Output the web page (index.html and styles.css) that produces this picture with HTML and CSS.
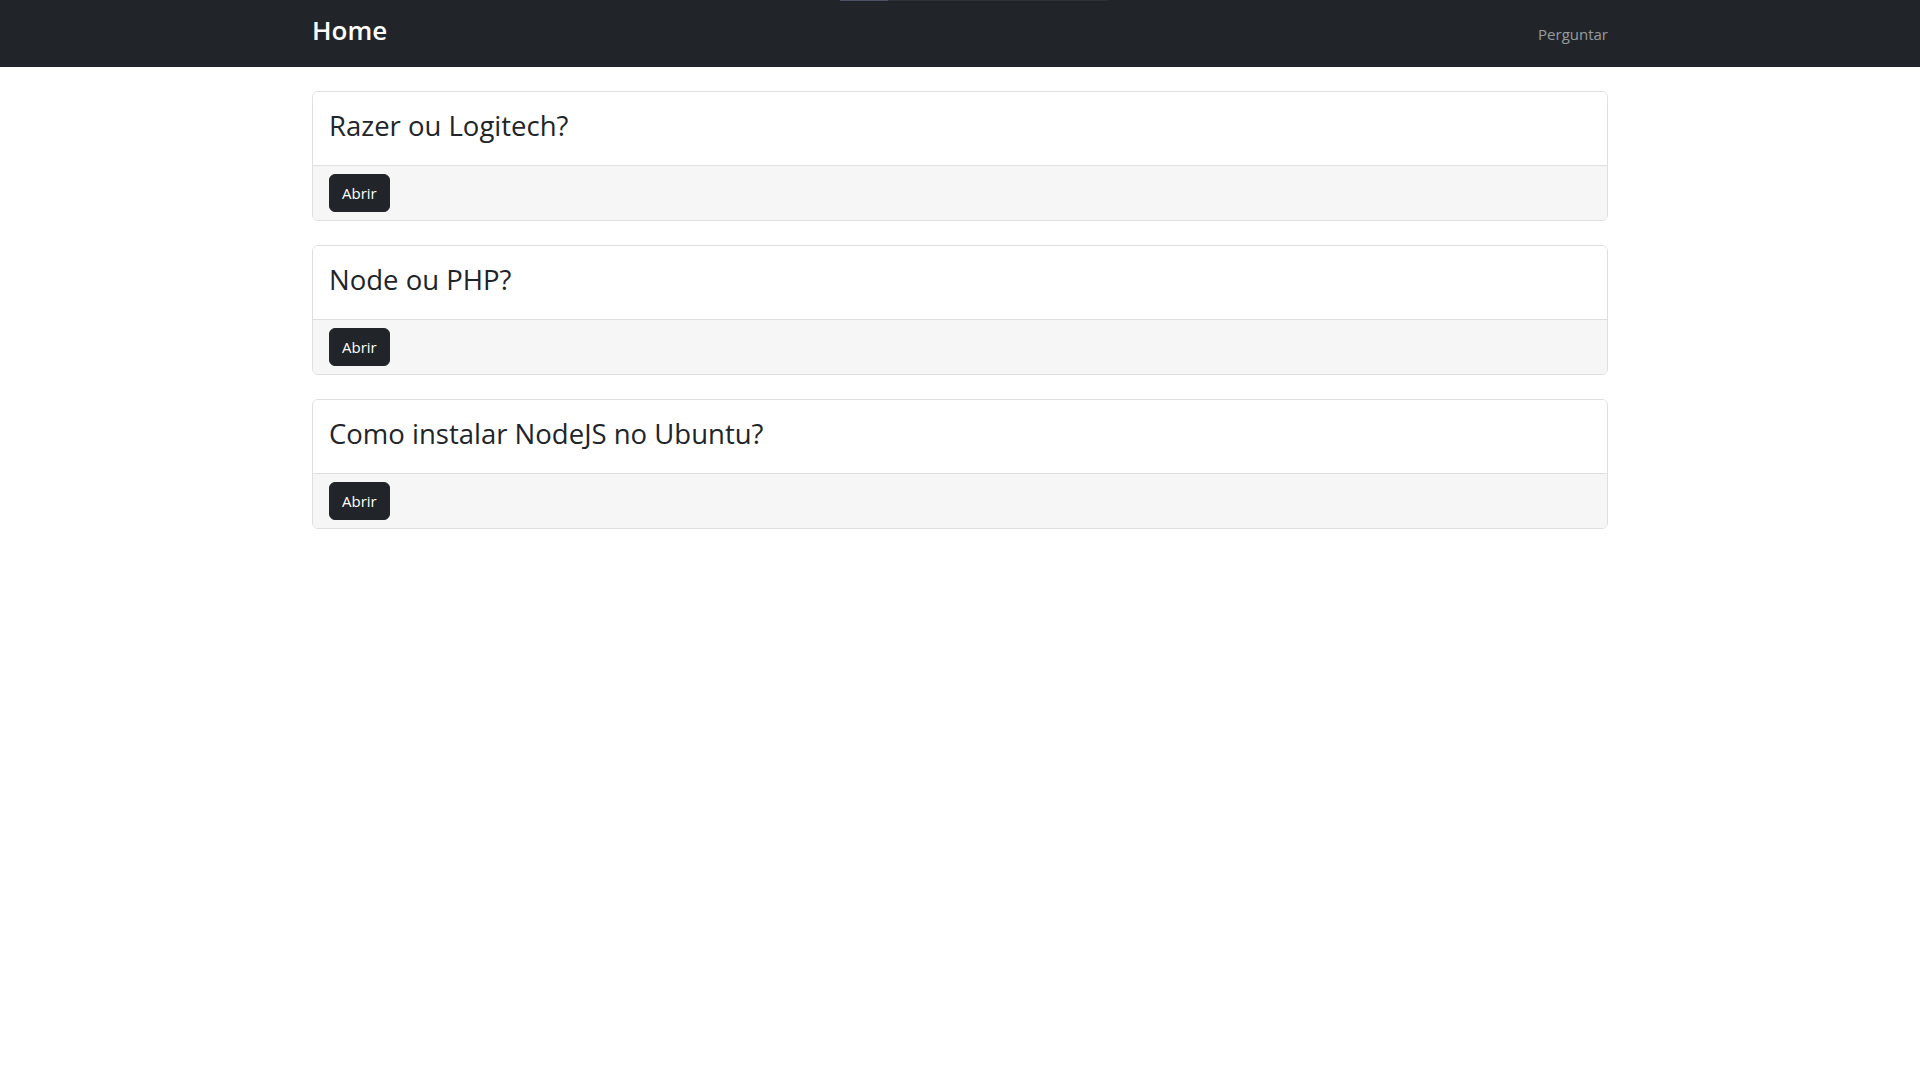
FILE: index.html
```html
<!DOCTYPE html>
<html lang="pt-BR">
<head>
<meta charset="utf-8">
<title>Home</title>
<link rel="stylesheet" href="styles.css">
</head>
<body>
<div class="top-strip"><span class="strip-a"></span><span class="strip-b"></span></div>
<nav class="navbar">
  <div class="container nav-inner">
    <a class="brand" href="#">Home</a>
    <a class="nav-link" href="#">Perguntar</a>
  </div>
</nav>
<main class="container">
  <div class="card">
    <div class="card-header"><h3 class="card-title">Razer ou Logitech?</h3></div>
    <div class="card-footer"><a class="btn" href="#">Abrir</a></div>
  </div>
  <div class="card">
    <div class="card-header"><h3 class="card-title">Node ou PHP?</h3></div>
    <div class="card-footer"><a class="btn" href="#">Abrir</a></div>
  </div>
  <div class="card">
    <div class="card-header"><h3 class="card-title">Como instalar NodeJS no Ubuntu?</h3></div>
    <div class="card-footer"><a class="btn" href="#">Abrir</a></div>
  </div>
</main>
</body>
</html>
```
FILE: styles.css
```css
* { box-sizing: border-box; }
html, body { margin: 0; padding: 0; }
body {
  font-family: "Open Sans", "Noto Sans", "Liberation Sans", sans-serif;
  font-size: 16px;
  line-height: 1.5;
  color: #212529;
  background: #fff;
}
.container {
  width: 1320px;
  margin: 0 auto;
  padding: 0 12px;
}
.top-strip {
  position: absolute;
  top: 0;
  left: 840px;
  display: flex;
  height: 1px;
}
.strip-a { width: 48px; background: #4b5263; }
.strip-b { width: 220px; background: #2c3037; }
.navbar {
  background: #212529;
  height: 67px;
  display: flex;
  align-items: center;
}
.nav-inner {
  display: flex;
  align-items: center;
  justify-content: space-between;
}
.brand {
  color: #fff;
  text-decoration: none;
  font-size: 26px;
  font-weight: 600;
  line-height: 1.2;
  margin-top: -5px;
}
.nav-link {
  color: rgba(255,255,255,0.55);
  text-decoration: none;
  font-size: 15px;
  line-height: 24px;
}
.card {
  margin-top: 24px;
  border: 1px solid #dfdfdf;
  border-radius: 6px;
  overflow: hidden;
}
.card-header {
  padding: 17px 16px 15px;
  border-bottom: 1px solid #dfdfdf;
  background: #fff;
}
.card-title {
  margin: 0 0 8px;
  font-size: 27.5px;
  font-weight: 500;
  line-height: 1.2;
}
.card-footer {
  padding: 8px 16px;
  background: #f6f6f6;
}
.btn {
  display: inline-block;
  background: #212529;
  color: #fff;
  border: 1px solid #212529;
  border-radius: 6px;
  padding: 6px 12px;
  font-size: 15px;
  line-height: 24px;
  text-decoration: none;
}
```
